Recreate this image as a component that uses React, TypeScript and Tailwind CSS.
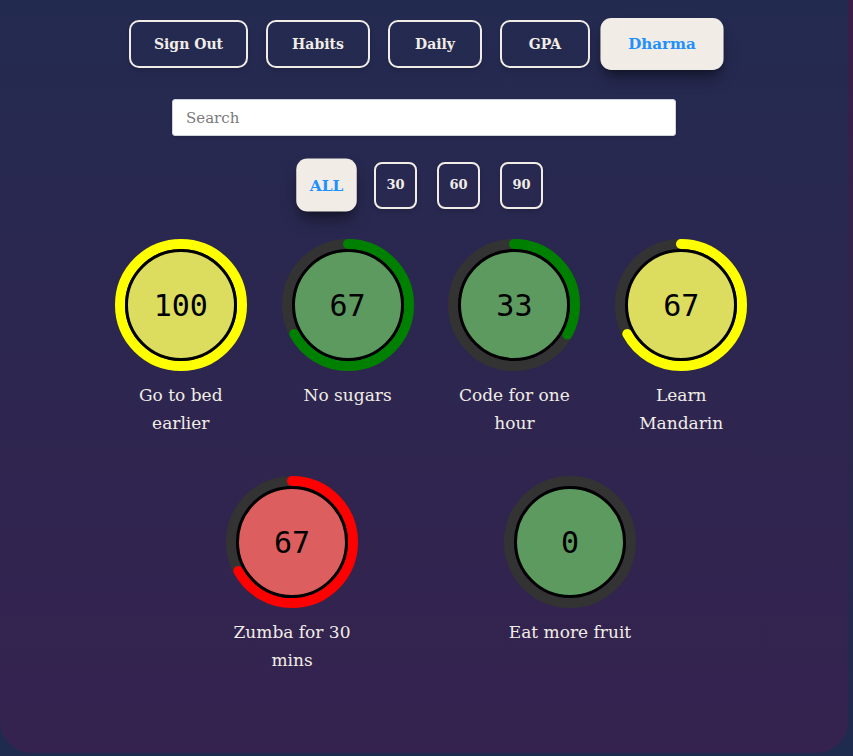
import { useState } from "react"

type Habit = { name: string; pct: number; ring: string; fill: string }

const habits: Habit[] = [
    { name: "Go to bed earlier", pct: 100, ring: "#ffff00", fill: "#dcdc5f" },
    { name: "No sugars", pct: 67, ring: "#008000", fill: "#5c9a5f" },
    { name: "Code for one hour", pct: 33, ring: "#008000", fill: "#5c9a5f" },
    { name: "Learn Mandarin", pct: 67, ring: "#ffff00", fill: "#dcdc5f" },
    { name: "Zumba for 30 mins", pct: 67, ring: "#ff0000", fill: "#dc5e5e" },
    { name: "Eat more fruit", pct: 0, ring: "#008000", fill: "#5c9a5f" },
]

const Ring = ({ h }: { h: Habit }) => {
    const r = 61
    const c = 2 * Math.PI * r
    return (
        <div className="relative h-[132px] w-[132px]">
            <svg width="132" height="132" viewBox="0 0 132 132">
                <circle cx="66" cy="66" r={r} fill="none" stroke="#333333" strokeWidth="10" />
                {h.pct > 0 && (
                    <circle
                        cx="66"
                        cy="66"
                        r={r}
                        fill="none"
                        stroke={h.ring}
                        strokeWidth="10"
                        strokeLinecap={h.pct >= 100 ? "butt" : "round"}
                        strokeDasharray={`${(c * h.pct) / 100} ${c}`}
                        transform="rotate(-90 66 66)"
                    />
                )}
                <circle cx="66" cy="66" r="54.5" fill={h.fill} stroke="#000" strokeWidth="3" />
            </svg>
            <span className="absolute inset-0 flex items-center justify-center font-['DejaVu_Sans_Mono',monospace] text-[30px] text-black">
                {h.pct}
            </span>
        </div>
    )
}

const HabitCard = ({ h }: { h: Habit }) => (
    <div className="flex w-[138px] flex-col items-center">
        <Ring h={h} />
        <p className="mt-[10px] text-center text-[17px] leading-[28px] text-[#f1ede6]">{h.name}</p>
    </div>
)

const App = () => {
    const [range, setRange] = useState("ALL")
    const [search, setSearch] = useState("")

    const nav = [
        { label: "Sign Out", w: "w-[119px]" },
        { label: "Habits", w: "w-[104px]" },
        { label: "Daily", w: "w-[94px]" },
        { label: "GPA", w: "w-[90px]" },
    ]

    // four to a row
    const rows: Habit[][] = []
    for (let i = 0; i < habits.length; i += 4) rows.push(habits.slice(i, i + 4))

    return (
        <div className="min-h-screen bg-linear-to-b from-[#3a1e48] to-[#1e2b4e] font-['DejaVu_Serif',serif]">
            <section className="flex h-[753px] w-[848px] flex-col items-center rounded-b-[32px] bg-linear-to-b from-[#232a50] to-[#35224f] pt-5">
                <nav className="flex items-center gap-[18px]">
                    {nav.map(n => (
                        <button
                            key={n.label}
                            className={`${n.w} h-12 rounded-[10px] border-2 border-[#f1ede6] text-[14px] font-bold text-[#f1ede6] shadow-md`}
                        >
                            {n.label}
                        </button>
                    ))}
                    <button className="-ml-[3px] h-12 w-[114px] scale-[1.08] rounded-[10px] bg-[#f1ede6] text-[14px] font-bold text-[#1e90ff] shadow-lg shadow-black/40">
                        Dharma
                    </button>
                </nav>

                <input
                    type="text"
                    placeholder="Search"
                    value={search}
                    onChange={e => setSearch(e.target.value)}
                    className="mt-[31px] h-[37px] w-[504px] rounded-[3px] border border-[#cfd4dc] bg-white px-[13px] text-[15px] text-gray-800 placeholder:text-[#7a7a7a] shadow-sm"
                />

                <div className="mt-[25px] flex items-center gap-5 pr-[6px]">
                    {["ALL", "30", "60", "90"].map(r =>
                        r === range ? (
                            <button
                                key={r}
                                onClick={() => setRange(r)}
                                className="h-12 w-[55px] scale-110 rounded-[10px] bg-[#f1ede6] text-[14px] font-bold text-[#1e90ff] shadow-lg shadow-black/40"
                            >
                                {r}
                            </button>
                        ) : (
                            <button
                                key={r}
                                onClick={() => setRange(r)}
                                className="h-[47px] w-[43px] rounded-[8px] border-2 border-[#f1ede6] text-[13px] font-bold text-[#f1ede6] shadow-md"
                            >
                                {r}
                            </button>
                        )
                    )}
                </div>

                <div className="mt-[30px] ml-[14px] flex w-[696px] flex-col gap-y-[39px]">
                    {rows.map((row, i) => (
                        <div key={i} className="flex justify-evenly">
                            {row.map(h => (
                                <HabitCard key={h.name} h={h} />
                            ))}
                        </div>
                    ))}
                </div>
            </section>
        </div>
    )
}

export default App
